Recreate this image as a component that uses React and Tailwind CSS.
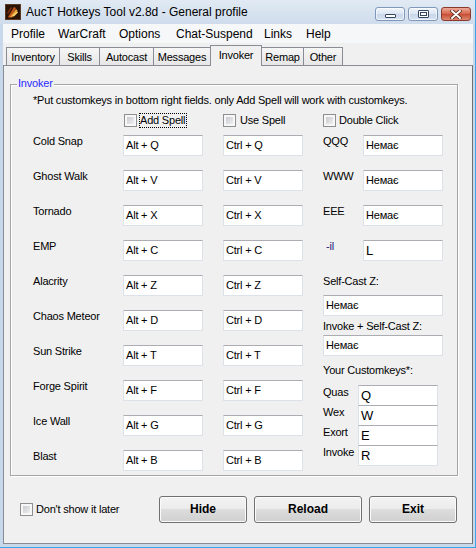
import React from 'react';

const ui = "font-['Liberation_Sans',Arial,sans-serif]";

function Check() {
  return (
    <span className="block w-[13px] h-[13px] shrink-0 border border-[#8f8f8f] bg-[#f7f7f7] p-[2px]">
      <span className="block w-full h-full bg-gradient-to-br from-[#c9ccd1] to-[#eeeeee]" />
    </span>
  );
}

function Field({ value, w = 'w-[80px]', big = false }) {
  return (
    <div
      className={`${w} h-[21px] shrink-0 bg-white border border-[#dde2e8] border-t-[#abadb3] flex items-center pl-[2px] text-black ${
        big ? 'text-[13px] tracking-normal' : ''
      }`}
    >
      {value}
    </div>
  );
}

const spells = [
  ['Cold Snap', 'Alt + Q', 'Ctrl + Q'],
  ['Ghost Walk', 'Alt + V', 'Ctrl + V'],
  ['Tornado', 'Alt + X', 'Ctrl + X'],
  ['EMP', 'Alt + C', 'Ctrl + C'],
  ['Alacrity', 'Alt + Z', 'Ctrl + Z'],
  ['Chaos Meteor', 'Alt + D', 'Ctrl + D'],
  ['Sun Strike', 'Alt + T', 'Ctrl + T'],
  ['Forge Spirit', 'Alt + F', 'Ctrl + F'],
  ['Ice Wall', 'Alt + G', 'Ctrl + G'],
  ['Blast', 'Alt + B', 'Ctrl + B'],
];

const combos = [
  ['QQQ', 'Немає', false, false],
  ['WWW', 'Немає', false, false],
  ['EEE', 'Немає', false, false],
  ['-il', 'L', true, true],
];

const customKeys = [
  ['Quas', 'Q'],
  ['Wex', 'W'],
  ['Exort', 'E'],
  ['Invoke', 'R'],
];

const menus = [
  ['Profile', 'w-[47px]'],
  ['WarCraft', 'w-[61px]'],
  ['Options', 'w-[57px]'],
  ['Chat-Suspend', 'w-[88px]'],
  ['Links', 'w-[42px]'],
  ['Help', 'w-[40px]'],
];

const tabs = [
  ['Inventory', 'w-[54px]'],
  ['Skills', 'w-[41px]'],
  ['Autocast', 'w-[55px]'],
  ['Messages', 'w-[58px]'],
  ['Invoker', 'w-[52px]'],
  ['Remap', 'w-[43px]'],
  ['Other', 'w-[40px]'],
];

function AppIcon() {
  return (
    <svg width="16" height="16" viewBox="0 0 16 16" className="shrink-0">
      <rect x="0.5" y="0.5" width="15" height="15" fill="#2a1307" stroke="#5a3a22" />
      <path d="M3 13 L9 3 L11 4 L5 14 Z" fill="#c2561a" />
      <path d="M5 13 L11 5 L12.5 6.5 L7 13.5 Z" fill="#f0a236" />
      <path d="M7 12 L12 7 L13 8.5 L9 12.5 Z" fill="#f7d36a" />
      <path d="M2 9 L6 3 L7 4 L3 10 Z" fill="#8a2f10" />
    </svg>
  );
}

function CaptionButton({ kind }) {
  if (kind === 'close') {
    return (
      <div className="w-[30px] h-[14px] rounded-[3px] border border-[#8a3a2c] bg-[linear-gradient(#ebab98,#d5634a_50%,#c44a31_50%,#dc8a70)] flex items-center justify-center">
        <svg width="12" height="9" viewBox="0 0 12 9">
          <path d="M2 1 L10 8 M10 1 L2 8" stroke="#4a1a12" strokeWidth="3.4" strokeLinecap="round" />
          <path d="M2 1 L10 8 M10 1 L2 8" stroke="#ffffff" strokeWidth="2" strokeLinecap="round" />
        </svg>
      </div>
    );
  }
  return (
    <div className="w-[30px] h-[14px] rounded-[3px] border border-[#7f97b8] bg-[linear-gradient(#f1f5fa,#dbe5f1_50%,#c8d7ea_50%,#d6e2f0)] shadow-[inset_0_0_0_1px_rgba(255,255,255,0.6)] flex items-center justify-center">
      {kind === 'min' ? (
        <span className="block w-[11px] h-[4px] mt-[4px] rounded-[1px] border border-[#34465f] bg-white" />
      ) : (
        <span className="block w-[11px] h-[8px] rounded-[1px] border border-[#34465f] bg-white p-[1px]">
          <span className="block w-full h-full border border-[#34465f]" />
        </span>
      )}
    </div>
  );
}

function Button({ children, w }) {
  return (
    <div
      className={`${w} h-[27px] shrink-0 rounded-[3px] border border-[#707070] bg-[linear-gradient(#f3f3f3,#ebebeb_50%,#dddddd_50%,#cfcfcf)] shadow-[inset_0_0_0_1px_#fbfbfb] flex items-center justify-center text-[12px] font-bold text-black tracking-normal`}
    >
      {children}
    </div>
  );
}

export default function App() {
  return (
    <div
      className={`${ui} w-[476px] h-[548px] flex flex-col border-r border-b border-[#3aa4e4] bg-[linear-gradient(#e1eaf4,#cfdcec_24px,#c7d8eb_24px)] pl-[3px] pr-[2px] pb-[3px] text-black`}
    >
      {/* title bar */}
      <div className="h-[24px] flex items-center shrink-0">
        <div className="ml-[2px]">
          <AppIcon />
        </div>
        <span className="ml-[5px] text-[12px] text-black">AucT Hotkeys Tool v2.8d - General profile</span>
        <div className="ml-auto mr-[2px] self-start mt-[7px] flex gap-[3px]">
          <CaptionButton kind="min" />
          <CaptionButton kind="max" />
          <CaptionButton kind="close" />
        </div>
      </div>

      {/* client area */}
      <div className="flex-1 flex flex-col bg-[#f0f0f0]">
        <div className="h-[19px] shrink-0 bg-[#f6f7f9] flex items-center pl-[8px] text-[12px]">
          {menus.map(([m, w]) => (
            <span key={m} className={`${w} shrink-0`}>
              {m}
            </span>
          ))}
        </div>

        <div className="h-[22px] shrink-0 flex items-end pl-[3px] text-[11px] tracking-[-0.2px]">
          {tabs.map(([t, w], i) =>
            t === 'Invoker' ? (
              <div
                key={t}
                className={`${w} h-[21px] -ml-px -mb-px relative z-10 border border-b-0 border-[#898c95] bg-[#f0f0f0] flex justify-center pt-[3px] leading-[13px]`}
              >
                {t}
              </div>
            ) : (
              <div
                key={t}
                className={`${w} h-[18px] ${i ? '-ml-px' : ''} border border-b-0 border-[#898c95] bg-[linear-gradient(#f6f6f6,#e6e6e6)] flex justify-center pt-[3px] leading-[13px]`}
              >
                {t}
              </div>
            )
          )}
        </div>

        {/* tab page */}
        <div className="flex-1 border border-[#898c95] border-r-[#6f6f6f] bg-[#f0f0f0] text-[11px] tracking-[-0.2px] leading-[13px]">
          <div className="relative ml-[6px] mt-[18px] w-[448px] h-[392px] border border-[#a5a5a5] shadow-[1px_1px_0_#ffffff,inset_1px_1px_0_#ffffff]">
            <span className="absolute left-[6px] top-[-8px] px-[1px] bg-[#f0f0f0] text-[#2b2bff]">Invoker</span>

            <div className="pl-[22px] pt-[9px]">
              <div className="h-[13px]">
                *Put customkeys in bottom right fields. only Add Spell will work with customkeys.
              </div>

              <div className="flex mt-[6px]">
                {/* left block */}
                <div className="w-[270px] shrink-0">
                  <div className="h-[15px] flex items-center pl-[91px]">
                    <div className="w-[99px] flex items-center">
                      <Check />
                      <span className="ml-[2px] border border-dotted border-black h-[15px] flex items-center pr-[1px]">Add Spell</span>
                    </div>
                    <div className="flex items-center">
                      <Check />
                      <span className="ml-[4px]">Use Spell</span>
                    </div>
                  </div>

                  <div className="mt-[7px] flex flex-col gap-[14px]">
                    {spells.map(([name, alt, ctrl]) => (
                      <div key={name} className="flex items-start h-[21px]">
                        <span className="w-[90px] shrink-0">{name}</span>
                        <Field value={alt} />
                        <div className="ml-[20px]">
                          <Field value={ctrl} />
                        </div>
                      </div>
                    ))}
                  </div>
                </div>

                {/* right block */}
                <div className="ml-[20px] w-[120px] shrink-0">
                  <div className="h-[15px] flex items-center">
                    <Check />
                    <span className="ml-[3px]">Double Click</span>
                  </div>

                  <div className="mt-[7px] flex flex-col gap-[14px]">
                    {combos.map(([label, val, big, odd]) => (
                      <div key={label} className="flex items-start h-[21px]">
                        <span className={`w-[40px] shrink-0 ${odd ? 'pl-[3px] text-[#22227a]' : ''}`}>{label}</span>
                        <Field value={val} big={big} />
                      </div>
                    ))}
                  </div>

                  <div className="mt-[14px] h-[13px]">Self-Cast Z:</div>
                  <div className="mt-[7px]">
                    <Field value="Немає" w="w-[120px]" />
                  </div>
                  <div className="mt-[4px] h-[13px]">Invoke + Self-Cast Z:</div>
                  <div className="mt-[2px]">
                    <Field value="Немає" w="w-[120px]" />
                  </div>
                  <div className="mt-[8px] h-[13px]">Your Customkeys*:</div>

                  <div className="mt-[8px] flex flex-col">
                    {customKeys.map(([label, key], i) => (
                      <div key={label} className="flex items-start">
                        <span className="w-[35px] shrink-0 pt-[1px]">{label}</span>
                        <div
                          className={`w-[80px] ${i === 3 ? 'h-[21px] border-b border-b-[#dde2e8]' : 'h-[20px]'} bg-white border-t border-x border-t-[#abadb3] border-x-[#dde2e8] flex items-center pl-[2px] text-[13px] tracking-normal`}
                        >
                          {key}
                        </div>
                      </div>
                    ))}
                  </div>
                </div>
              </div>
            </div>
          </div>

          {/* bottom row */}
          <div className="mt-[20px] h-[27px] flex items-center">
            <div className="w-[155px] shrink-0 pl-[16px] flex items-center">
              <Check />
              <span className="ml-[3px]">Don't show it later</span>
            </div>
            <Button w="w-[88px]">Hide</Button>
            <div className="ml-[7px]">
              <Button w="w-[108px]">Reload</Button>
            </div>
            <div className="ml-[7px]">
              <Button w="w-[88px]">Exit</Button>
            </div>
          </div>
        </div>
      </div>
    </div>
  );
}
